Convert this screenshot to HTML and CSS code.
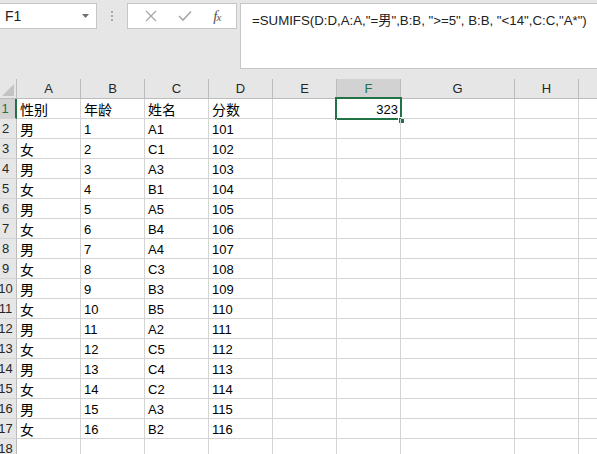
FILE: index.html
```html
<!DOCTYPE html>
<html>
<head>
<meta charset="utf-8">
<link rel="stylesheet" href="styles.css">
</head>
<body>
<div class="toolbar">
  <div class="namebox">
    <span class="name">F1</span>
    <svg class="caret" width="7" height="4" viewBox="0 0 7 4"><path d="M0 0H7L3.5 4Z" fill="#707070"/></svg>
  </div>
  <div class="dots"><i></i><i></i><i></i></div>
  <div class="fnbox">
    <svg class="ico" width="12" height="12" viewBox="0 0 12 12"><path d="M1 1L11 11M11 1L1 11" stroke="#a8a8a8" stroke-width="1.3" fill="none"/></svg>
    <svg class="ico" width="14" height="12" viewBox="0 0 14 12"><path d="M1 6L5 10L13 1.5" stroke="#a8a8a8" stroke-width="1.6" fill="none"/></svg>
    <span class="fx">f<sub>x</sub></span>
  </div>
  <div class="formula">=SUMIFS(D:D,A:A,"=男",B:B, "&gt;=5", B:B, "&lt;14",C:C,"A*")</div>
</div>
<div class="sheet">
  <div class="corner"><svg width="12" height="12" viewBox="0 0 12 12"><path d="M12 0V12H0Z" fill="#c3c3c3"/></svg></div>
  <div class="ch">A</div><div class="ch">B</div><div class="ch">C</div><div class="ch">D</div><div class="ch">E</div><div class="ch sel">F</div><div class="ch">G</div><div class="ch">H</div><div class="ch"></div>

  <div class="rh selr">1</div><div class="c zh">性别</div><div class="c zh">年龄</div><div class="c zh">姓名</div><div class="c zh">分数</div><div class="c"></div><div class="c num active">323<span class="outline"></span><span class="handle"></span></div><div class="c"></div><div class="c"></div><div class="c"></div>
  <div class="rh">2</div><div class="c zh">男</div><div class="c">1</div><div class="c">A1</div><div class="c">101</div><div class="c"></div><div class="c"></div><div class="c"></div><div class="c"></div><div class="c"></div>
  <div class="rh">3</div><div class="c zh">女</div><div class="c">2</div><div class="c">C1</div><div class="c">102</div><div class="c"></div><div class="c"></div><div class="c"></div><div class="c"></div><div class="c"></div>
  <div class="rh">4</div><div class="c zh">男</div><div class="c">3</div><div class="c">A3</div><div class="c">103</div><div class="c"></div><div class="c"></div><div class="c"></div><div class="c"></div><div class="c"></div>
  <div class="rh">5</div><div class="c zh">女</div><div class="c">4</div><div class="c">B1</div><div class="c">104</div><div class="c"></div><div class="c"></div><div class="c"></div><div class="c"></div><div class="c"></div>
  <div class="rh">6</div><div class="c zh">男</div><div class="c">5</div><div class="c">A5</div><div class="c">105</div><div class="c"></div><div class="c"></div><div class="c"></div><div class="c"></div><div class="c"></div>
  <div class="rh">7</div><div class="c zh">女</div><div class="c">6</div><div class="c">B4</div><div class="c">106</div><div class="c"></div><div class="c"></div><div class="c"></div><div class="c"></div><div class="c"></div>
  <div class="rh">8</div><div class="c zh">男</div><div class="c">7</div><div class="c">A4</div><div class="c">107</div><div class="c"></div><div class="c"></div><div class="c"></div><div class="c"></div><div class="c"></div>
  <div class="rh">9</div><div class="c zh">女</div><div class="c">8</div><div class="c">C3</div><div class="c">108</div><div class="c"></div><div class="c"></div><div class="c"></div><div class="c"></div><div class="c"></div>
  <div class="rh">10</div><div class="c zh">男</div><div class="c">9</div><div class="c">B3</div><div class="c">109</div><div class="c"></div><div class="c"></div><div class="c"></div><div class="c"></div><div class="c"></div>
  <div class="rh">11</div><div class="c zh">女</div><div class="c">10</div><div class="c">B5</div><div class="c">110</div><div class="c"></div><div class="c"></div><div class="c"></div><div class="c"></div><div class="c"></div>
  <div class="rh">12</div><div class="c zh">男</div><div class="c">11</div><div class="c">A2</div><div class="c">111</div><div class="c"></div><div class="c"></div><div class="c"></div><div class="c"></div><div class="c"></div>
  <div class="rh">13</div><div class="c zh">女</div><div class="c">12</div><div class="c">C5</div><div class="c">112</div><div class="c"></div><div class="c"></div><div class="c"></div><div class="c"></div><div class="c"></div>
  <div class="rh">14</div><div class="c zh">男</div><div class="c">13</div><div class="c">C4</div><div class="c">113</div><div class="c"></div><div class="c"></div><div class="c"></div><div class="c"></div><div class="c"></div>
  <div class="rh">15</div><div class="c zh">女</div><div class="c">14</div><div class="c">C2</div><div class="c">114</div><div class="c"></div><div class="c"></div><div class="c"></div><div class="c"></div><div class="c"></div>
  <div class="rh">16</div><div class="c zh">男</div><div class="c">15</div><div class="c">A3</div><div class="c">115</div><div class="c"></div><div class="c"></div><div class="c"></div><div class="c"></div><div class="c"></div>
  <div class="rh">17</div><div class="c zh">女</div><div class="c">16</div><div class="c">B2</div><div class="c">116</div><div class="c"></div><div class="c"></div><div class="c"></div><div class="c"></div><div class="c"></div>
  <div class="rh">18</div><div class="c"></div><div class="c"></div><div class="c"></div><div class="c"></div><div class="c"></div><div class="c"></div><div class="c"></div><div class="c"></div><div class="c"></div>
</div>
</body>
</html>
```

FILE: styles.css
```css
html, body {
  margin: 0;
  padding: 0;
  background: #e6e6e6;
  overflow: hidden;
  font-family: "Liberation Sans", "Noto Sans CJK SC", sans-serif;
}
.toolbar {
  height: 79px;
  display: flex;
  align-items: flex-start;
  padding-top: 3px;
  box-sizing: border-box;
}
.namebox {
  width: 98px;
  height: 26px;
  margin-left: -1px;
  box-sizing: border-box;
  background: #fff;
  border: 1px solid #c6c6c6;
  display: flex;
  align-items: center;
  justify-content: space-between;
  padding: 0 7px 0 5px;
  font-size: 14px;
  color: #222;
}
.caret { margin-top: -1px; }
.dots {
  width: 30px;
  height: 26px;
  display: flex;
  flex-direction: column;
  align-items: center;
  justify-content: center;
  gap: 2px;
}
.dots i {
  display: block;
  width: 2px;
  height: 2px;
  background: #a9a9a9;
}
.fnbox {
  width: 110px;
  height: 26px;
  box-sizing: border-box;
  background: #fff;
  border: 1px solid #c6c6c6;
  display: flex;
  align-items: center;
  justify-content: space-around;
  padding: 0 4px 0 6px;
}
.fx {
  font-family: "Liberation Serif", serif;
  font-style: italic;
  font-size: 15px;
  color: #555;
  line-height: 1;
}
.fx sub {
  font-size: 11px;
  vertical-align: 0;
  margin-left: -1px;
}
.formula {
  flex: 1;
  margin-left: 3px;
  margin-right: -2px;
  height: 66px;
  box-sizing: border-box;
  background: #fff;
  border: 1px solid #c6c6c6;
  padding: 6px 0 0 11px;
  font-size: 13.25px;
  color: #222;
  white-space: nowrap;
  overflow: hidden;
}
.sheet {
  display: grid;
  grid-template-columns: 17px 64px 64px 64px 64px 64px 64px 114px 64px 64px;
  grid-template-rows: 20px;
  grid-auto-rows: 20px;
  background: #fff;
}
.corner {
  background: #e6e6e6;
  border-right: 1px solid #bcbcbc;
  border-bottom: 1px solid #bcbcbc;
  display: flex;
  align-items: flex-end;
  justify-content: flex-end;
  padding: 0 2px 2px 0;
}
.ch {
  background: #e6e6e6;
  border-right: 1px solid #bcbcbc;
  border-bottom: 1px solid #bcbcbc;
  text-align: center;
  font-size: 13px;
  line-height: 20px;
  color: #262626;
}
.ch.sel {
  background: #d2d2d2;
  color: #217346;
  border-bottom: 2px solid #217346;
}
.rh {
  background: #e6e6e6;
  border-right: 1px solid #bcbcbc;
  border-bottom: 1px solid #d4d4d4;
  font-size: 13px;
  line-height: 20px;
  color: #262626;
  text-align: center;
  padding-right: 5px;
  white-space: nowrap;
  display: flex;
  justify-content: center;
}
.rh.selr {
  background: #d2d2d2;
  color: #217346;
  border-right: 2px solid #217346;
}
.c {
  position: relative;
  border-right: 1px solid #d4d4d4;
  border-bottom: 1px solid #d4d4d4;
  font-size: 13px;
  line-height: 20px;
  padding: 1px 0 0 3px;
  color: #000;
  white-space: nowrap;
}
.c.zh {
  font-family: "Noto Sans CJK SC", sans-serif;
  font-size: 14px;
  line-height: 18px;
  padding-top: 1px;
}
.c.num {
  text-align: right;
  padding-right: 2px;
}
.outline {
  position: absolute;
  left: -2px;
  top: -2px;
  right: -2px;
  bottom: -2px;
  border: 2px solid #217346;
}
.handle {
  position: absolute;
  right: -4px;
  bottom: -5px;
  width: 5px;
  height: 5px;
  background: #217346;
  outline: 1px solid #fff;
}
```
